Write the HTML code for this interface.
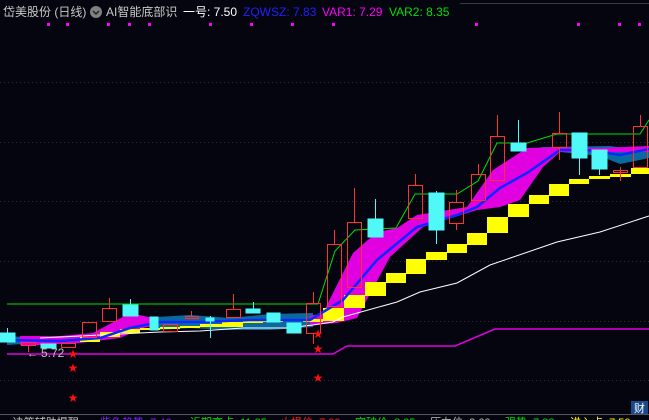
<!DOCTYPE html>
<html><head><meta charset="utf-8"><style>
html,body{margin:0;padding:0;background:#05050f;width:649px;height:420px;overflow:hidden;position:relative;font-family:"Liberation Sans","Noto Sans CJK SC",sans-serif}
.t{position:absolute;top:4px;font-size:12px;line-height:16px;white-space:nowrap}
.b{position:absolute;top:416px;font-size:11px;line-height:14px;white-space:nowrap}
</style></head><body>
<svg width="649" height="420" style="position:absolute;left:0;top:0">
<line x1="460" y1="3.5" x2="649" y2="3.5" stroke="#3a3a40"/>
<g stroke="#2e2e38" stroke-dasharray="1,3">
<line x1="0" y1="82.5" x2="649" y2="82.5"/><line x1="0" y1="142.5" x2="649" y2="142.5"/>
<line x1="0" y1="201.5" x2="649" y2="201.5"/><line x1="0" y1="261.5" x2="649" y2="261.5"/>
<line x1="0" y1="321.5" x2="649" y2="321.5"/><line x1="0" y1="380.5" x2="649" y2="380.5"/>
</g>
<line x1="0" y1="414.5" x2="649" y2="414.5" stroke="#55555c"/>
<g fill="#ff00ff">
<rect x="47" y="23" width="3" height="3"/><rect x="66" y="23" width="3" height="3"/><rect x="107" y="23" width="3" height="3"/><rect x="128" y="23" width="3" height="3"/><rect x="148" y="23" width="3" height="3"/><rect x="209" y="23" width="3" height="3"/><rect x="250" y="23" width="3" height="3"/><rect x="291" y="23" width="3" height="3"/><rect x="332" y="23" width="3" height="3"/><rect x="475" y="23" width="3" height="3"/><rect x="577" y="23" width="3" height="3"/><rect x="618" y="23" width="3" height="3"/><rect x="638" y="23" width="3" height="3"/>
</g>
<polyline points="7,354 333,354 347,346 455,346 495,329 649,329" fill="none" stroke="#e000e0" stroke-width="1.5"/>
<polygon points="157,317 190,315 230,318 270,314 313,313 313,327 270,330 230,330 190,328 157,330" fill="#0a6aa0"/>
<polygon points="540,147 610,146 640,150 649,149 649,158 630,162 620,164 600,156 560,152" fill="#0a6aa0"/>
<polygon points="7,336 40,338 80,340 7,345" fill="#0a6aa0"/>
<polygon points="20,336 60,336 93,333 130,313 153,318 157,325 143,328 120,338 80,343 40,345 20,345" fill="#e000e0"/>
<polygon points="310,316 323,313 353,253 377,232 397,228 417,215 467,207 493,170 527,148 560,147 600,148 649,146 649,152 600,152 560,152 543,167 520,200 500,207 477,210 423,227 390,257 357,318 337,323 310,325" fill="#e000e0"/>
<g fill="#ffff00">
<rect x="80" y="337" width="20" height="5"/><rect x="100" y="332" width="20" height="5"/><rect x="120" y="329" width="20" height="4"/><rect x="140" y="328" width="20" height="2"/><rect x="160" y="327" width="20" height="2"/><rect x="180" y="326" width="20" height="2"/><rect x="200" y="324" width="22" height="3"/><rect x="222" y="322" width="21" height="5"/><rect x="243" y="320" width="20" height="3"/><rect x="263" y="320" width="20" height="2"/><rect x="303" y="319" width="20" height="3"/>
<rect x="323" y="308" width="21" height="13"/><rect x="344" y="295" width="21" height="13"/><rect x="365" y="282" width="21" height="14"/><rect x="386" y="273" width="20" height="10"/><rect x="406" y="259" width="20" height="15"/><rect x="426" y="252" width="21" height="8"/><rect x="447" y="244" width="20" height="9"/><rect x="467" y="233" width="20" height="12"/><rect x="487" y="217" width="21" height="16"/><rect x="508" y="204" width="21" height="13"/><rect x="529" y="195" width="20" height="9"/><rect x="549" y="184" width="20" height="12"/><rect x="569" y="179" width="20" height="5"/><rect x="589" y="176" width="21" height="3"/><rect x="610" y="174" width="21" height="3"/><rect x="631" y="168" width="18" height="6"/>
</g>
<polyline points="40,338 100,335 160,332 200,331 243,328 287,328 313,325 333,322 343,317 397,302 420,292 457,283 490,265 557,242 600,232 649,216" fill="none" stroke="#fff" stroke-width="1"/>
<polyline points="7,340 60,341 100,338 130,328 160,322 200,322 250,320 300,320 310,320 343,300 377,260 417,227 457,215 477,207 500,188 527,173 560,150 587,150 620,155 649,149" fill="none" stroke="#0a28ff" stroke-width="2.5"/>
<polyline points="7,304 318,304 335,251 355,230 396,228 415,194 457,194 478,181 497,143 527,143 557,134 640,134 649,120" fill="none" stroke="#00e000" stroke-width="1"/>
<g stroke="#ff3030" fill="none">
<line x1="28.5" y1="345" x2="28.5" y2="352"/><rect x="21.5" y="342.5" width="14" height="3"/>
<rect x="61.5" y="343.5" width="14" height="4"/>
<rect x="82.5" y="322.5" width="14" height="15"/>
<line x1="109.5" y1="298" x2="109.5" y2="308"/><rect x="102.5" y="308.5" width="14" height="13"/>
<rect x="163.5" y="324.5" width="14" height="7"/>
<line x1="191.5" y1="311" x2="191.5" y2="316"/><rect x="185.5" y="316.5" width="13" height="2"/>
<line x1="233.5" y1="294" x2="233.5" y2="309"/><rect x="226.5" y="309.5" width="14" height="8"/>
<line x1="313.5" y1="292" x2="313.5" y2="303"/><line x1="313.5" y1="333" x2="313.5" y2="344"/><rect x="306.5" y="303.5" width="14" height="30"/>
<line x1="334.5" y1="230" x2="334.5" y2="244"/><rect x="327.5" y="244.5" width="14" height="62"/>
<line x1="354.5" y1="188" x2="354.5" y2="222"/><rect x="347.5" y="222.5" width="14" height="65"/>
<line x1="415.5" y1="174" x2="415.5" y2="185"/><rect x="408.5" y="185.5" width="14" height="33"/>
<line x1="456.5" y1="190" x2="456.5" y2="202"/><line x1="456.5" y1="223" x2="456.5" y2="230"/><rect x="449.5" y="202.5" width="14" height="21"/>
<line x1="478.5" y1="164" x2="478.5" y2="174"/><rect x="471.5" y="174.5" width="14" height="26"/>
<line x1="497.5" y1="115" x2="497.5" y2="136"/><rect x="490.5" y="136.5" width="14" height="44"/>
<line x1="559.5" y1="112" x2="559.5" y2="133"/><line x1="559.5" y1="147" x2="559.5" y2="160"/><rect x="552.5" y="133.5" width="14" height="14"/>
<line x1="620.5" y1="167" x2="620.5" y2="181"/><rect x="613.5" y="170.5" width="14" height="2"/>
<line x1="640.5" y1="115" x2="640.5" y2="126"/><rect x="633.5" y="126.5" width="14" height="41"/>
</g>
<g fill="#50f8f8" stroke="#50f8f8">
<line x1="7.5" y1="328" x2="7.5" y2="333"/><rect x="0" y="333" width="15" height="9"/>
<rect x="41" y="344" width="15" height="4"/>
<line x1="130.5" y1="299" x2="130.5" y2="305"/><rect x="123" y="305" width="15" height="11"/>
<rect x="150" y="317" width="8" height="13"/>
<line x1="210.5" y1="316" x2="210.5" y2="338"/><rect x="206" y="318" width="8" height="3"/>
<line x1="253.5" y1="302" x2="253.5" y2="309"/><rect x="246" y="309" width="14" height="4"/>
<rect x="267" y="313" width="13" height="9"/>
<rect x="287" y="323" width="14" height="10"/>
<line x1="375.5" y1="199" x2="375.5" y2="219"/><rect x="368" y="219" width="15" height="18"/>
<line x1="436.5" y1="191" x2="436.5" y2="244"/><rect x="429" y="193" width="15" height="37"/>
<line x1="518.5" y1="120" x2="518.5" y2="143"/><rect x="511" y="143" width="15" height="8"/>
<line x1="579.5" y1="158" x2="579.5" y2="175"/><rect x="572" y="133" width="15" height="25"/>
<line x1="599.5" y1="169" x2="599.5" y2="175"/><rect x="592" y="150" width="15" height="19"/>
</g>
<g fill="#ff1010" font-size="12" text-anchor="middle" font-family="DejaVu Sans">
<text x="73" y="358">★</text><text x="73" y="372">★</text><text x="73" y="402">★</text>
<text x="318" y="338">★</text><text x="318" y="353">★</text><text x="318" y="382">★</text>
</g>
<text x="27" y="357" fill="#c0c0c0" font-size="11" font-family="Liberation Sans">←</text>
<text x="41" y="357" fill="#c0c0c0" font-size="12" font-family="Liberation Sans">5.72</text>
<rect x="631" y="401" width="17" height="13" fill="#1a4a8a"/>
<text x="639.5" y="412" fill="#fff" font-size="11" text-anchor="middle" font-family="Noto Sans CJK SC">财</text>
<circle cx="96" cy="12" r="6" fill="#808080"/>
<polyline points="93,11 96,14 99,11" fill="none" stroke="#222" stroke-width="1.5"/>
</svg>
<div class="t" style="left:3px;color:#c8c8c8">岱美股份 (日线)</div>
<div class="t" style="left:106px;color:#c8c8c8">AI智能底部识</div>
<div class="t" style="left:183px;color:#fff">一号: 7.50</div>
<div class="t" style="left:243px;color:#2020ff">ZQWSZ: 7.83</div>
<div class="t" style="left:322px;color:#ff00ff">VAR1: 7.29</div>
<div class="t" style="left:389px;color:#00e000">VAR2: 8.35</div>
<div class="b" style="left:3px;color:#c0c0c0">● 决策辅助提醒</div>
<div class="b" style="left:100px;color:#8020ff">紫色趋势: 7.46</div>
<div class="b" style="left:190px;color:#00e000">近期高点: 11.85</div>
<div class="b" style="left:280px;color:#ff2020">止损位: 7.00</div>
<div class="b" style="left:355px;color:#00e000">突破价: 8.35</div>
<div class="b" style="left:430px;color:#c0c0c0">压力位: 8.60</div>
<div class="b" style="left:505px;color:#00e000">强势: 7.83</div>
<div class="b" style="left:570px;color:#ffff00">进入点: 7.50</div>
</body></html>
